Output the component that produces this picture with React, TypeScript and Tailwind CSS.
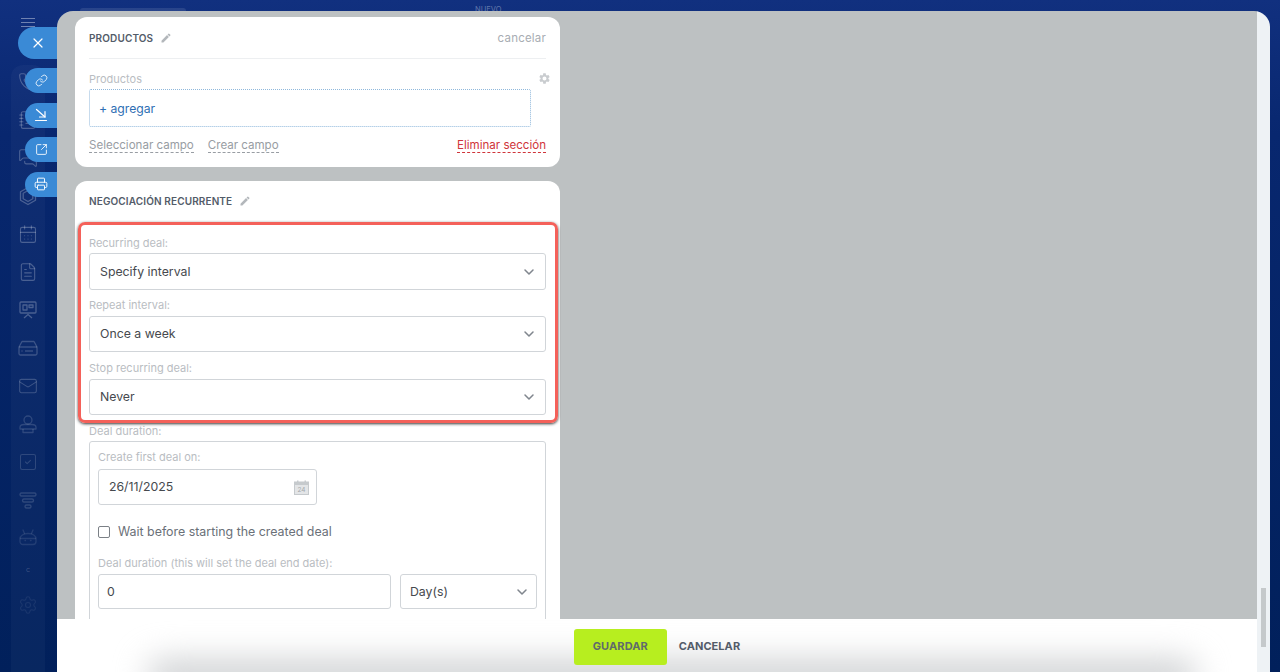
import { ChevronDown, Link, Printer, SquareArrowOutUpRight, X, CalendarDays, FileText, Mail, SquareCheck, Settings, MessagesSquare, NotebookText, Phone } from "lucide-react"
import { MdEdit, MdSettings } from "react-icons/md"

function Funnel() {
  return (
    <svg width="20" height="20" viewBox="0 0 20 20" fill="none" stroke="currentColor" strokeWidth="1.4">
      <rect x="2" y="3" width="16" height="3" rx="1.5" />
      <rect x="4.5" y="9" width="11" height="3" rx="1.5" />
      <rect x="7" y="15" width="6" height="3" rx="1.5" />
    </svg>
  )
}

function DoubleHexagon() {
  return (
    <svg width="20" height="20" viewBox="0 0 20 20" fill="none" stroke="currentColor" strokeWidth="1.3" strokeLinejoin="round">
      <path d="M10 1.5L17.5 5.8V14.2L10 18.5L2.5 14.2V5.8Z" />
      <path d="M10 4.5L14.8 7.2V12.8L10 15.5L5.2 12.8V7.2Z" />
    </svg>
  )
}

function Board() {
  return (
    <svg width="20" height="20" viewBox="0 0 20 20" fill="none" stroke="currentColor" strokeWidth="1.3" strokeLinejoin="round">
      <rect x="2" y="2" width="16" height="11" rx="1" />
      <rect x="5" y="5" width="4" height="5" />
      <rect x="11" y="5" width="4" height="2.5" />
      <path d="M6 18L10 14.5L14 18" />
    </svg>
  )
}

function Drive() {
  return (
    <svg width="22" height="20" viewBox="0 0 22 20" fill="none" stroke="currentColor" strokeWidth="1.3" strokeLinejoin="round">
      <path d="M5 3.5H17L20 9V15.5A1.5 1.5 0 0 1 18.5 17H3.5A1.5 1.5 0 0 1 2 15.5V9Z" />
      <path d="M2 9H20" />
      <path d="M8 13H16" />
      <path d="M4.5 13H5.5" />
    </svg>
  )
}

function Agent() {
  return (
    <svg width="22" height="20" viewBox="0 0 22 20" fill="none" stroke="currentColor" strokeWidth="1.3" strokeLinejoin="round">
      <circle cx="11" cy="6" r="4" />
      <path d="M3 13.5C3 11.5 5 10.5 7 10.5H15C17 10.5 19 11.5 19 13.5V15H3Z" />
      <path d="M6 15V18.5H16V15" />
    </svg>
  )
}

function Robot() {
  return (
    <svg width="20" height="20" viewBox="0 0 20 20" fill="none" stroke="currentColor" strokeWidth="1.3" strokeLinejoin="round" strokeLinecap="round">
      <path d="M2 11C2 7.5 5.5 5.5 10 5.5C14.5 5.5 18 7.5 18 11V13.5C18 15.5 16.5 16.5 15 16.5H5C3.5 16.5 2 15.5 2 13.5Z" />
      <path d="M5 2L6.5 5.5M15 2L13.5 5.5" />
      <path d="M2.5 10.5H17.5" />
      <path d="M7 12.5H7.5M12.5 12.5H13" />
    </svg>
  )
}

function DownloadArrow() {
  return (
    <svg width="14" height="14" viewBox="0 0 14 14" fill="none" stroke="currentColor" strokeWidth="1.2" strokeLinecap="round" strokeLinejoin="round">
      <path d="M2.5 1.5L11 9" />
      <path d="M11 3.5V9H5.5" />
      <path d="M1.5 12.5H12.5" />
    </svg>
  )
}

function DateIcon() {
  return (
    <svg width="15" height="15" viewBox="0 0 15 15" className="text-[#c6cacd]">
      <rect x="0.5" y="2" width="14" height="12.5" fill="#e3e5e7" stroke="currentColor" />
      <rect x="0.5" y="2" width="14" height="3" fill="currentColor" />
      <rect x="3" y="0.5" width="1.5" height="3" fill="currentColor" />
      <rect x="10.5" y="0.5" width="1.5" height="3" fill="currentColor" />
      <text x="7.5" y="12" fontSize="6.5" textAnchor="middle" fill="#a4a9ad">24</text>
    </svg>
  )
}

function Sidebar() {
  return (
    <div className="relative w-[57px] shrink-0 pl-[11px]">
      <div className="flex justify-center w-[34px] pt-[18px] mb-[38px]">
        <div className="flex flex-col gap-[3px] w-[14px]">
          <div className="h-px bg-white/40" />
          <div className="h-px bg-white/40" />
          <div className="h-px bg-white/40" />
        </div>
      </div>
      <div className="flex flex-col items-center w-[34px] h-[640px] gap-[18px] bg-white/[0.03] rounded-t-xl pt-[7px]">
        <Phone size={20} strokeWidth={1.3} className="text-white/25" />
        <NotebookText size={20} strokeWidth={1.3} className="text-white/25" />
        <MessagesSquare size={20} strokeWidth={1.3} className="text-white/25" />
        <div className="text-white/25"><DoubleHexagon /></div>
        <CalendarDays size={20} strokeWidth={1.3} className="text-white/25" />
        <FileText size={20} strokeWidth={1.3} className="text-white/25" />
        <div className="text-white/25"><Board /></div>
        <div className="text-white/20"><Drive /></div>
        <Mail size={20} strokeWidth={1.3} className="text-white/20" />
        <div className="text-white/15"><Agent /></div>
        <div className="text-white/15"><SquareCheck size={20} strokeWidth={1.3} /></div>
        <div className="text-white/15"><Funnel /></div>
        <div className="text-white/10"><Robot /></div>
        <div className="text-[7px] leading-[8px] h-[8px] text-white/20">c</div>
        <Settings size={20} strokeWidth={1.3} className="text-white/[0.07] mt-[3px]" />
      </div>
    </div>
  )
}

function SideTabs() {
  return (
    <div className="absolute left-0 top-[27px] w-[57px] flex flex-col items-end text-white">
      <div className="w-[39px] h-[32px] rounded-l-full bg-[#3a8ad6] flex items-center justify-center mb-[9px]">
        <X size={16} strokeWidth={1.8} />
      </div>
      <div className="flex flex-col gap-[9.6px]">
        <div className="w-[32px] h-[25px] rounded-l-full bg-[#3a8ad6] flex items-center justify-center">
          <Link size={13} strokeWidth={1.5} />
        </div>
        <div className="w-[32px] h-[25px] rounded-l-full bg-[#3a8ad6] flex items-center justify-center">
          <DownloadArrow />
        </div>
        <div className="w-[32px] h-[25px] rounded-l-full bg-[#3a8ad6] flex items-center justify-center">
          <SquareArrowOutUpRight size={13} strokeWidth={1.6} />
        </div>
        <div className="w-[32px] h-[25px] rounded-l-full bg-[#3a8ad6] flex items-center justify-center">
          <Printer size={14} strokeWidth={1.6} />
        </div>
      </div>
    </div>
  )
}

function Label({ children }: { children: string }) {
  return <div className="text-[11px] leading-[14px] text-[#b9bdc2]">{children}</div>
}

function SelectBox({ value, className }: { value: string; className: string }) {
  return (
    <div className={`flex items-center justify-between bg-white border border-[#d1d5d9] rounded-[3px] ${className}`}>
      <span className="text-[12.3px] text-[#46494e] mt-[1px]">{value}</span>
      <ChevronDown size={16} strokeWidth={2.3} className="text-[#80868e]" />
    </div>
  )
}

function CardTitle({ children }: { children: string }) {
  return (
    <div className="flex items-center gap-[7px] h-[14px]">
      <span className="text-[10px] font-semibold tracking-[0.13px] text-[#535c69]">{children}</span>
      <MdEdit size={12} className="text-[#b3b7bb]" />
    </div>
  )
}

function ProductsCard() {
  return (
    <div className="bg-white rounded-[12px] h-[150px] px-[14px] pt-[14px]">
      <div className="flex items-center justify-between h-[14px]">
        <CardTitle>PRODUCTOS</CardTitle>
        <span className="text-[11.5px] tracking-[0.2px] text-[#a8adb3] mt-[1px]">cancelar</span>
      </div>
      <div className="h-px bg-[#edeff1] mt-[13px] mb-[13px]" />
      <div className="flex items-center justify-between h-[14px] w-[462px]">
        <span className="text-[11px] text-[#b9bdc2]">Productos</span>
        <MdSettings size={13} className="text-[#c9cccf] -mt-[1px]" />
      </div>
      <div className="w-[442px] h-[38px] mt-[3px] px-[9px] flex items-center border border-dotted border-[#8fb8dc] rounded-[2px]">
        <span className="text-[12.2px] text-[#2f6fb4] mt-[2px]">+ agregar</span>
      </div>
      <div className="flex items-center justify-between mt-[12px]">
        <div className="flex gap-[14px] text-[11.55px] text-[#989da3]">
          <span className="border-b border-dashed border-[#989da3] leading-[13px]">Seleccionar campo</span>
          <span className="border-b border-dashed border-[#989da3] leading-[13px]">Crear campo</span>
        </div>
        <span className="text-[11.55px] text-[#d0353a] border-b border-dashed border-[#d0353a] leading-[13px]">Eliminar sección</span>
      </div>
    </div>
  )
}

function RecurringCard() {
  return (
    <div className="bg-white rounded-t-[12px] mt-[14px] h-[520px] px-[14px] pt-[13px]">
      <CardTitle>NEGOCIACIÓN RECURRENTE</CardTitle>
      {/* highlight */}
      <div className="-ml-[11px] -mr-[12px] mt-[14px] h-[201px] pl-[8px] pr-[9px] pt-[11px] border-[3px] border-[#f4615a] rounded-[7px] shadow-[0_1px_3px_rgba(20,20,20,0.85)]">
        <Label>Recurring deal:</Label>
        <SelectBox value="Specify interval" className="h-[37px] pl-[10px] pr-[8px] mt-[3px]" />
        <div className="mt-[8px]"><Label>Repeat interval:</Label></div>
        <SelectBox value="Once a week" className="h-[36px] pl-[10px] pr-[8px] mt-[4px]" />
        <div className="mt-[9px]"><Label>Stop recurring deal:</Label></div>
        <SelectBox value="Never" className="h-[36px] pl-[10px] pr-[8px] mt-[4px]" />
      </div>
      <div className="mt-[1px]"><Label>Deal duration:</Label></div>
      <div className="mt-[3px] h-[260px] border border-[#d1d5d9] rounded-[3px] px-[8px] pt-[8px]">
        <Label>Create first deal on:</Label>
        <div className="flex items-center justify-between w-[219px] h-[36px] mt-[5px] pl-[10px] pr-[7px] border border-[#d1d5d9] rounded-[3px]">
          <span className="text-[12.3px] text-[#46494e] mt-[1px]">26/11/2025</span>
          <DateIcon />
        </div>
        <div className="flex items-center gap-[8px] mt-[20px] h-[14px]">
          <div className="w-[12px] h-[12px] border border-[#7b8086] rounded-[2px]" />
          <span className="text-[12.4px] text-[#6a7078] mt-[1px]">Wait before starting the created deal</span>
        </div>
        <div className="mt-[17px]"><Label>Deal duration (this will set the deal end date):</Label></div>
        <div className="flex gap-[9px] mt-[4px]">
          <div className="flex items-center w-[293px] h-[35px] pl-[8px] border border-[#d1d5d9] rounded-[3px]">
            <span className="text-[12.3px] text-[#46494e] mt-[1px]">0</span>
          </div>
          <SelectBox value="Day(s)" className="w-[137px] h-[35px] pl-[9px] pr-[6px]" />
        </div>
      </div>
    </div>
  )
}

function Footer() {
  return (
    <div className="relative overflow-hidden h-[53px] shrink-0 bg-white flex items-center justify-center gap-[12px] pt-[2px]">
      <div className="absolute left-[90px] right-[60px] top-[40px] h-[36px] bg-[#d0d2d4] rounded-full blur-[16px]" />
      <div className="relative w-[93px] h-[36px] rounded-[3px] bg-[#b7ee1f] flex items-center justify-center text-[11px] font-bold tracking-[0.1px] text-[#5f6a6b]">
        GUARDAR
      </div>
      <div className="relative text-[11px] font-bold tracking-[0.05px] text-[#535c69]">CANCELAR</div>
    </div>
  )
}

export default function App() {
  return (
    <div className="relative h-[672px] w-full overflow-hidden flex bg-gradient-to-b from-[#11307f] via-[#08276f] via-[20%] to-[#01205b] font-['Inter',sans-serif]">
      <div className="absolute left-[80px] top-[8px] w-[106px] h-[6px] rounded-[3px] bg-white/10" />
      <div className="absolute left-[475px] top-[6px] text-[7.5px] leading-[8px] text-white/35">NUEVO</div>
      <Sidebar />
      <div className="flex-1 min-w-0 flex mt-[11px] mr-[10px] rounded-t-[16px] overflow-hidden relative">
        <div className="flex-1 min-w-0 flex flex-col bg-[#bdc1c2]">
          <div className="flex-1 min-h-0 overflow-hidden pt-[6px] pl-[18px]">
            <div className="w-[485px]">
              <ProductsCard />
              <RecurringCard />
            </div>
          </div>
          <Footer />
        </div>
        <div className="w-[13px] shrink-0 bg-[#eef2f5] pt-[577px] pl-[4px]">
          <div className="w-[5px] h-[59px] bg-[#c5c9cb]" />
        </div>
      </div>
      <SideTabs />
    </div>
  )
}
